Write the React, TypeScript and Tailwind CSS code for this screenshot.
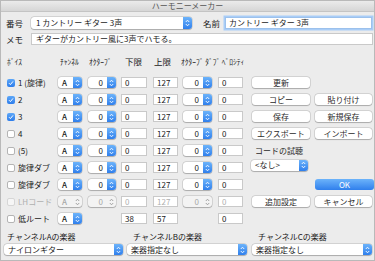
import React from 'react'

const FONT = "font-['Noto_Sans_CJK_JP','Noto_Sans',sans-serif]"

// ─── small macOS-like widgets ────────────────────────────────────────────────
function Stepper({ disabled = false }: { disabled?: boolean }) {
  return (
    <div
      className={
        'flex h-full w-[9px] items-center justify-center rounded-r-[3px] ' +
        (disabled ? 'bg-transparent' : 'bg-gradient-to-b from-[#6cb3fa] to-[#2f7fec]')
      }
    >
      <svg width="5" height="8" viewBox="0 0 5 8" fill="none">
        <path d="M0.8 3 L2.5 1.2 L4.2 3" stroke={disabled ? '#9a9a9a' : '#fff'} strokeWidth="0.9" />
        <path d="M0.8 5 L2.5 6.8 L4.2 5" stroke={disabled ? '#9a9a9a' : '#fff'} strokeWidth="0.9" />
      </svg>
    </div>
  )
}

function Select({ value, w, align = 'left', disabled = false, bold = false }: {
  value: string; w: string; align?: 'left' | 'right'; disabled?: boolean; bold?: boolean
}) {
  return (
    <div
      className={
        'flex h-[11px] items-stretch rounded-[3px] shadow-[0_0_0_0.5px_rgba(0,0,0,0.18),0_0.5px_1px_rgba(0,0,0,0.2)] ' +
        (disabled ? 'bg-[#f3f3f3]' : 'bg-white') + ' ' + w
      }
    >
      <div
        className={
          'flex flex-1 items-center px-[4px] text-[8px] leading-none ' +
          (align === 'right' ? 'justify-end ' : 'justify-start ') +
          (bold ? 'font-medium ' : '') +
          (disabled ? 'text-[#a8a8a8]' : 'text-[#1a1a1a]')
        }
      >
        {value}
      </div>
      <Stepper disabled={disabled} />
    </div>
  )
}

function Field({ value, w, disabled = false }: { value: string; w: string; disabled?: boolean }) {
  return (
    <div
      className={
        'flex h-[11px] items-center border border-[#c9c9c9] bg-white px-[3px] text-[8px] leading-none ' +
        (disabled ? 'text-[#b0b0b0] ' : 'text-[#1a1a1a] ') + w
      }
    >
      {value}
    </div>
  )
}

function Check({ checked, disabled = false }: { checked: boolean; disabled?: boolean }) {
  if (checked) {
    return (
      <div className="flex h-[8px] w-[8px] items-center justify-center rounded-[2px] bg-gradient-to-b from-[#5da7f8] to-[#2d7deb]">
        <svg width="6" height="6" viewBox="0 0 6 6" fill="none">
          <path d="M1 3.2 L2.4 4.6 L5 1.4" stroke="#fff" strokeWidth="1" />
        </svg>
      </div>
    )
  }
  return (
    <div
      className={
        'h-[8px] w-[8px] rounded-[2px] border ' +
        (disabled ? 'border-[#d6d6d6] bg-[#f6f6f6]' : 'border-[#b4b4b4] bg-white')
      }
    />
  )
}

function Btn({ label, w = 'w-[58px]', primary = false }: { label: string; w?: string; primary?: boolean }) {
  return (
    <div
      className={
        'flex h-[11px] items-center justify-center rounded-[3px] text-[8px] leading-none ' +
        (primary
          ? 'bg-gradient-to-b from-[#6cb3fa] to-[#2f7fec] text-white'
          : 'bg-white text-[#2a2a2a] shadow-[0_0_0_0.5px_rgba(0,0,0,0.18),0_0.5px_1px_rgba(0,0,0,0.2)]') +
        ' ' + w
      }
    >
      {label}
    </div>
  )
}

// ─── data ────────────────────────────────────────────────────────────────────
type Voice = {
  label: string; checked: boolean; disabled?: boolean
  oct: boolean; lo: string; hi: string
}

const VOICES: Voice[] = [
  { label: '1 (旋律)', checked: true, oct: true, lo: '0', hi: '127' },
  { label: '2', checked: true, oct: true, lo: '0', hi: '127' },
  { label: '3', checked: true, oct: true, lo: '0', hi: '127' },
  { label: '4', checked: false, oct: true, lo: '0', hi: '127' },
  { label: '(5)', checked: false, oct: true, lo: '0', hi: '127' },
  { label: '旋律ダブ', checked: false, oct: true, lo: '0', hi: '127' },
  { label: '旋律ダブ', checked: false, oct: true, lo: '0', hi: '127' },
  { label: 'LHコード', checked: false, disabled: true, oct: true, lo: '0', hi: '127' },
  { label: '低ルート', checked: false, oct: false, lo: '38', hi: '57' },
]

function RightSide({ i }: { i: number }) {
  switch (i) {
    case 0: return <><Btn label="更新" /><div /></>
    case 1: return <><Btn label="コピー" /><Btn label="貼り付け" w="w-[57px]" /></>
    case 2: return <><Btn label="保存" /><Btn label="新規保存" w="w-[57px]" /></>
    case 3: return <><Btn label="エクスポート" /><Btn label="インポート" w="w-[57px]" /></>
    case 4: return <div className="col-span-2 pl-[3px] text-[8px] leading-none text-[#2a2a2a]">コードの試聴</div>
    case 5: return <div className="col-span-2 -mt-[5px] -ml-[1px]"><Select value="<なし>" w="w-[57px]" /></div>
    case 6: return <><div /><Btn label="OK" w="w-[59px]" primary /></>
    case 7: return <><Btn label="追加設定" /><Btn label="キャンセル" w="w-[57px]" /></>
    default: return <><div /><div /></>
  }
}

export default function App() {
  return (
    <div className={`${FONT} flex h-[261px] w-[375px] flex-col overflow-hidden border border-[#b9b9b9] bg-[#ececec] text-[#1a1a1a]`}>
      {/* title bar */}
      <div className="flex h-[11px] shrink-0 items-center justify-center border-b border-[#c4c4c4] bg-gradient-to-b from-[#ebebeb] to-[#d6d6d6] text-[8px] leading-none text-[#555]">
        ハーモニーメーカー
      </div>

      {/* 番号 / 名前 */}
      <div className="mt-[5px] flex h-[12px] items-center pl-[5px]">
        <span className="w-[25px] text-[8.5px] leading-none">番号</span>
        <div className="flex h-[12px] w-[161px] items-stretch rounded-[3px] bg-white shadow-[0_0_0_0.5px_rgba(0,0,0,0.18),0_0.5px_1px_rgba(0,0,0,0.2)]">
          <div className="flex flex-1 items-center pl-[5px] text-[8px] leading-none">1 カントリー ギター 3声</div>
          <Stepper />
        </div>
        <span className="ml-[11px] w-[22px] text-[8.5px] leading-none">名前</span>
        <div className="flex h-[12px] w-[147px] items-center border border-[#9cc1ec] bg-white pl-[3px] text-[8px] leading-none shadow-[0_0_0_1.5px_#a9cdf7]">
          カントリー ギター 3声
        </div>
      </div>

      {/* メモ */}
      <div className="mt-[4px] flex h-[12px] items-center pl-[5px]">
        <span className="w-[25px] text-[8.5px] leading-none">メモ</span>
        <div className="flex h-[12px] w-[342px] items-center border border-[#c9c9c9] bg-white pl-[4px] text-[8px] leading-none">
          ギターがカントリー風に3声でハモる。
        </div>
      </div>

      {/* column headers */}
      <div className="mt-[12px] grid h-[9px] grid-cols-[51px_30px_34px_31px_28px_34px_35px] items-center pl-[6px] text-[7.5px] leading-none text-[#222]">
        <span>ﾎﾞｲｽ</span>
        <span className="pl-[2px]">ﾁｬﾝﾈﾙ</span>
        <span className="pl-[1px]">ｵｸﾀｰﾌﾞ</span>
        <span className="pl-[3px] text-[8.5px]">下限</span>
        <span className="pl-[1px] text-[8.5px]">上限</span>
        <span className="col-span-2 whitespace-nowrap">ｵｸﾀｰﾌﾞ ﾀﾞﾌﾞ ﾍﾞﾛｼﾃｨ</span>
      </div>

      {/* voice rows */}
      <div className="mt-[8px] flex flex-col">
        {VOICES.map((v, i) => (
          <div
            key={i}
            className="grid h-[17px] grid-cols-[51px_30px_33px_32px_30px_35px_34px_63px_57px] items-center pl-[6px]"
          >
            <div className={'flex items-center gap-[3px] text-[8px] leading-none ' + (v.disabled ? 'text-[#b0b0b0]' : 'text-[#1a1a1a]')}>
              <Check checked={v.checked} disabled={v.disabled} />
              <span>{v.label}</span>
            </div>
            <Select value="A" w="w-[24px]" bold disabled={v.disabled} />
            {v.oct ? <Select value="0" w="w-[28px]" align="right" disabled={v.disabled} /> : <div />}
            <Field value={v.lo} w="w-[26px]" disabled={v.disabled} />
            <Field value={v.hi} w="w-[25px]" disabled={v.disabled} />
            {v.oct ? <Select value="0" w="w-[29px]" align="right" disabled={v.disabled} /> : <div />}
            <Field value="0" w="w-[25px]" disabled={v.disabled} />
            <RightSide i={i} />
          </div>
        ))}
      </div>

      {/* channel instruments */}
      <div className="mt-[6px] grid grid-cols-[126px_125px_121px] pl-[4px] text-[8px] leading-none">
        <span className="pl-[2px]">チャンネルAの楽器</span>
        <span className="pl-[2px]">チャンネルBの楽器</span>
        <span className="pl-[2px]">チャンネルCの楽器</span>
      </div>
      <div className="mt-[3px] grid grid-cols-[123px_125px_121px] pl-[3px]">
        <Select value="ナイロンギター" w="w-[119px]" />
        <Select value="楽器指定なし" w="w-[120px]" />
        <Select value="楽器指定なし" w="w-[120px]" />
      </div>
    </div>
  )
}
